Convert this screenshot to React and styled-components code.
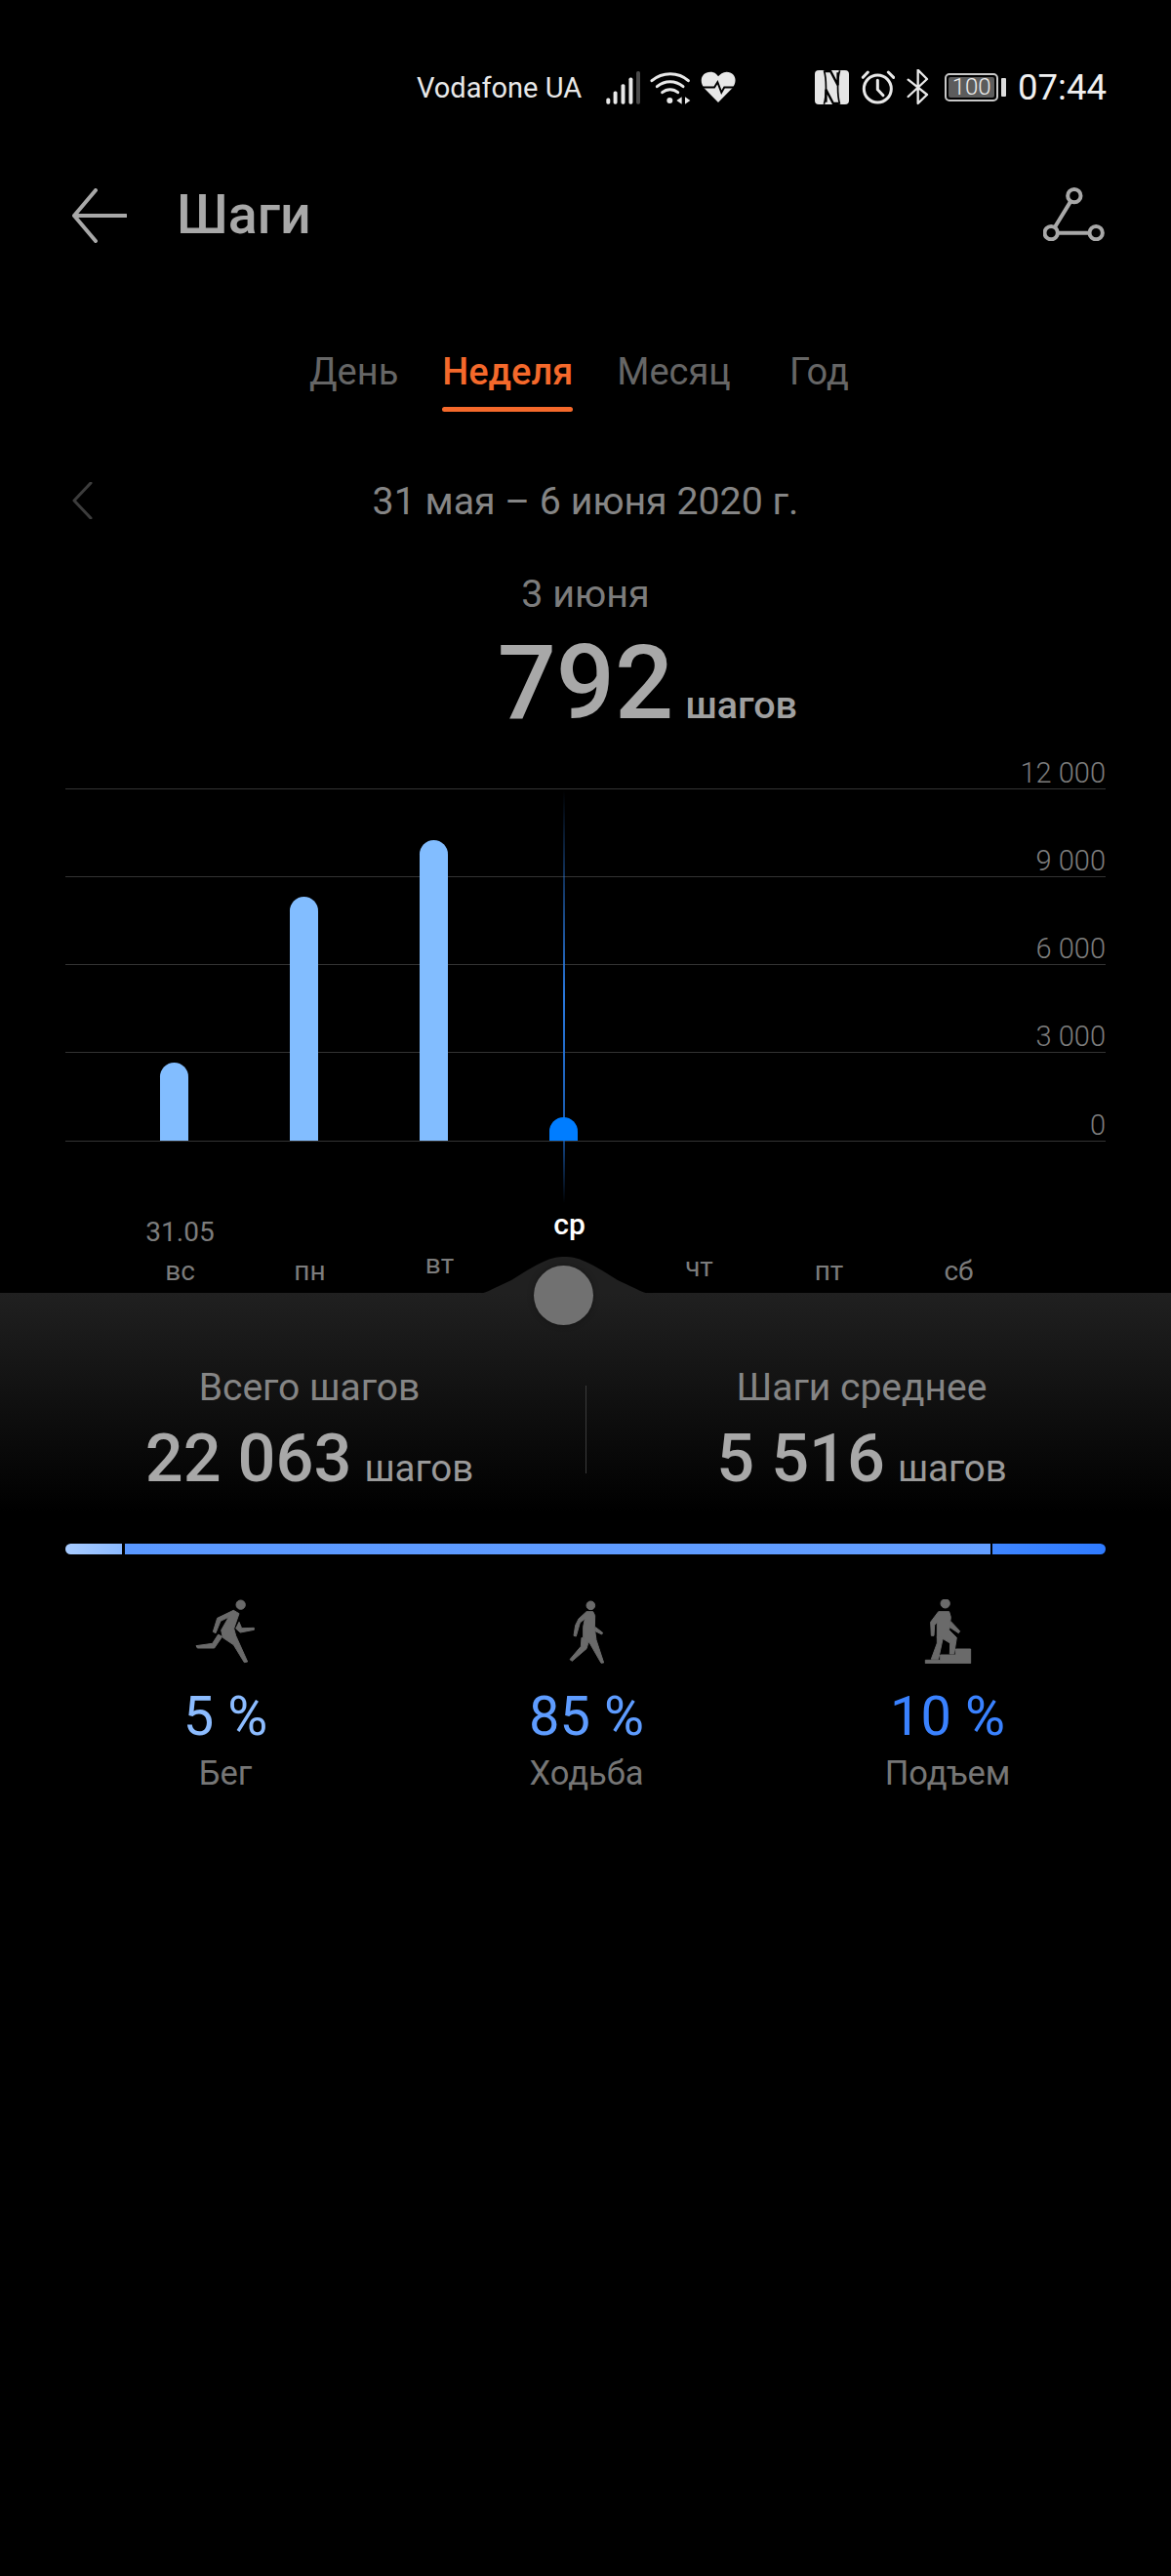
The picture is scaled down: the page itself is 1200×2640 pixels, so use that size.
import React from "react";
import styled, { createGlobalStyle } from "styled-components";

const GlobalStyle = createGlobalStyle`
  html, body {
    margin: 0;
    background: #000;
    font-family: Roboto, "Liberation Sans", sans-serif;
  }
  * {
    box-sizing: border-box;
  }
`;

const Page = styled.div`
  width: 1200px;
  min-height: 2640px;
  background: #000;
  overflow: hidden;
`;

/* status bar */
const StatusBar = styled.div`
  height: 176px;
  padding: 3px 66px 0 0;
  display: flex;
  align-items: center;
  justify-content: flex-end;
  gap: 80px;
  color: #e8e8e8;
`;
const StatusGroup = styled.div`
  display: flex;
  align-items: center;
  gap: ${(p) => p.$gap}px;
`;
const Carrier = styled.span`
  font-size: 29px;
  line-height: 36px;
  margin-right: 15px;
`;
const Clock = styled.span`
  font-size: 36.5px;
  line-height: 40px;
  color: #f0f0f0;
`;
const Battery = styled.div`
  margin-left: 4px;
  display: flex;
  align-items: center;
  gap: 3px;
`;
const BatteryBody = styled.div`
  width: 55px;
  height: 29px;
  padding: 2px;
  border: 2px solid #c8c8c8;
  border-radius: 5px;
  display: flex;
`;
const BatteryFill = styled.div`
  flex: 1;
  background: #5c5c5c;
  border-radius: 2px;
  color: #eee;
  font-size: 24px;
  font-weight: 300;
  line-height: 21px;
  text-align: center;
`;
const BatteryNub = styled.div`
  width: 5px;
  height: 19px;
  background: #dcdcdc;
  border-radius: 1px;
`;

/* header */
const Header = styled.div`
  height: 90px;
  padding: 0 68px 0 74px;
  display: flex;
  align-items: center;
`;
const Title = styled.h1`
  margin: 0 0 0 51px;
  flex: 1;
  font-size: 55.5px;
  line-height: 64px;
  font-weight: 500;
  color: #a8a8a8;
`;
const RouteSvg = styled.svg`
  margin-bottom: 3px;
`;

/* tabs */
const Tabs = styled.div`
  padding: 92px 0 0 317px;
  display: flex;
  gap: 45px;
`;
const Tab = styled.div`
  min-width: 91px;
  font-size: 38px;
  line-height: 46px;
  text-align: center;
  font-weight: ${(p) => (p.$active ? 500 : 400)};
  color: ${(p) => (p.$active ? "#f5692b" : "#666")};
  &::after {
    content: "";
    display: block;
    height: 5px;
    margin-top: 13px;
    border-radius: 3px;
    background: ${(p) => (p.$active ? "#f5692b" : "transparent")};
  }
`;

/* date + selected day */
const DateRow = styled.div`
  margin-top: 69px;
  padding: 0 74px;
  display: grid;
  grid-template-columns: 1fr auto 1fr;
  align-items: center;
`;
const ChevronSvg = styled.svg`
  margin-bottom: 2px;
`;
const DateText = styled.div`
  font-size: 39.3px;
  line-height: 46px;
  color: #858585;
`;
const DayTitle = styled.div`
  margin-top: 49px;
  font-size: 39.5px;
  line-height: 46px;
  text-align: center;
  color: #7c7c7c;
`;
const BigRow = styled.div`
  margin-top: 15px;
  display: grid;
  grid-template-columns: 1fr auto 1fr;
  align-items: baseline;
`;
const BigNumber = styled.div`
  grid-column: 2;
  font-size: 106px;
  line-height: 106px;
  font-weight: 500;
  color: #a8a8a8;
`;
const BigUnit = styled.div`
  margin-left: 12px;
  font-size: 39.5px;
  line-height: 40px;
  font-weight: 500;
  color: #a0a0a0;
`;

/* chart */
const Chart = styled.div`
  position: relative;
  margin: 0 67px;
  width: 1066px;
`;
const GridRow = styled.div`
  height: ${(p) => p.$h}px;
  display: flex;
  justify-content: flex-end;
  align-items: flex-end;
  border-bottom: 1px solid #333;
  font-size: 29px;
  line-height: 32px;
  font-weight: 300;
  color: #7d7d7d;
`;
const Marker = styled.div`
  position: absolute;
  left: 510px;
  top: 57px;
  width: 2px;
  height: 423px;
  background: linear-gradient(
    to bottom,
    rgba(42, 120, 220, 0),
    #2a78dc 50%,
    #1a5cb0 80%,
    rgba(20, 70, 140, 0)
  );
`;
const Bars = styled.div`
  position: absolute;
  left: 45px;
  bottom: 1px;
  display: grid;
  grid-template-columns: repeat(7, 133px);
  align-items: end;
  justify-items: center;
`;
const Bar = styled.div`
  width: 29px;
  height: ${(p) => p.$h}px;
  border-radius: 15px 15px 0 0;
  background: ${(p) => (p.$active ? "#007dff" : "#82bdff")};
`;

/* weekday labels */
const Days = styled.div`
  height: 155px;
  padding-left: 118px;
  display: grid;
  grid-template-columns: repeat(7, 133px);
  align-items: end;
`;
const Day = styled.div`
  padding-bottom: ${(p) => p.$lift}px;
  display: flex;
  flex-direction: column;
  align-items: center;
  gap: 8px;
  font-size: ${(p) => (p.$active ? 30 : 28)}px;
  line-height: 32px;
  font-weight: ${(p) => (p.$active ? 500 : 400)};
  color: ${(p) => (p.$active ? "#fff" : "#7c7c7c")};
`;

/* bottom panel */
const Panel = styled.div`
  position: relative;
  padding-top: 74px;
  background: linear-gradient(to bottom, #202020, #000 225px);
`;
const Hump = styled.svg`
  position: absolute;
  left: 487px;
  top: -37px;
  display: block;
`;
const Knob = styled.div`
  position: absolute;
  left: 547px;
  top: -28px;
  width: 61px;
  height: 61px;
  border-radius: 50%;
  background: #717171;
  box-shadow: 0 0 6px rgba(0, 0, 0, 0.35);
`;
const Stats = styled.div`
  padding: 0 67px;
  display: grid;
  grid-template-columns: 1fr 2px 1fr;
  column-gap: 32px;
`;
const Stat = styled.div`
  text-align: center;
`;
const StatLabel = styled.div`
  font-size: 39px;
  line-height: 46px;
  color: #858585;
`;
const StatValue = styled.div`
  margin-top: 14px;
  font-size: 68.5px;
  line-height: 72px;
  font-weight: 500;
  color: #a8a8a8;
`;
const StatUnit = styled.span`
  margin-left: 13px;
  font-size: 38.5px;
  line-height: 1;
  font-weight: 400;
  color: #9a9a9a;
`;
const Divider = styled.div`
  width: 1px;
  height: 90px;
  margin: 21px 0 0 1px;
  background: #3a3a3a;
`;
const Progress = styled.div`
  margin: 51px 67px 0;
  height: 11px;
  display: flex;
  gap: 2.5px;
  border-radius: 6px;
  overflow: hidden;
`;
const Segment = styled.div`
  flex: ${(p) => p.$size} 0 0;
  background: linear-gradient(to right, ${(p) => p.$from}, ${(p) => p.$to});
`;
const Metrics = styled.div`
  margin: 46px 46px 0;
  display: grid;
  grid-template-columns: repeat(3, 370px);
`;
const Metric = styled.div`
  display: flex;
  flex-direction: column;
  align-items: center;
`;
const MetricValue = styled.div`
  margin-top: 24px;
  font-size: 56px;
  line-height: 60px;
  color: ${(p) => p.$color};
`;
const MetricLabel = styled.div`
  margin-top: 8px;
  font-size: 34.5px;
  line-height: 40px;
  color: #767676;
`;

const SignalIcon = () => (
  <svg width="37" height="37" viewBox="60 60 112 110">
    <rect x="64" y="148" width="12" height="19" rx="5" fill="#e8e8e8" />
    <rect x="86" y="127" width="12" height="40" rx="5" fill="#e8e8e8" />
    <rect x="110" y="105" width="12" height="62" rx="5" fill="#e8e8e8" />
    <rect x="134" y="85" width="12" height="82" rx="5" fill="#e8e8e8" />
    <rect x="157" y="65" width="12" height="102" rx="5" fill="#4a4a4a" />
  </svg>
);

const WifiIcon = () => (
  <svg width="42" height="36" viewBox="200 60 126 108">
    <g fill="none" stroke="#e8e8e8" strokeWidth="9" strokeLinecap="round">
      <path d="M206 92C238 64 288 64 318 92" />
      <path d="M222 110C246 90 278 90 302 110" />
      <path d="M238 128C252 116 272 116 286 128" />
    </g>
    <circle cx="261" cy="153" r="9" fill="#e8e8e8" />
    <path d="M298 142V164L282 153Z M308 142V164L324 153Z" fill="#e8e8e8" />
  </svg>
);

const HeartIcon = () => (
  <svg width="38" height="33" viewBox="350 66 112 100">
    <path
      d="M406 163L362 118C345 95 355 68 382 68C395 68 402 75 406 82C412 75 420 68 432 68C458 68 468 95 450 118Z"
      fill="#e8e8e8"
    />
    <path
      d="M352 116H394L404 100L416 132L425 116H460"
      fill="none"
      stroke="#000"
      strokeWidth="6"
    />
  </svg>
);

const NfcIcon = () => (
  <svg width="35" height="35" viewBox="42 63 104 104">
    <rect x="42" y="63" width="104" height="104" rx="12" fill="#e6e6e6" />
    <path
      d="M70 64C78 90 78 140 70 166M118 64C110 90 110 140 118 166"
      fill="none"
      stroke="#000"
      strokeWidth="5"
    />
    <path
      d="M72 66H90L112 108V70M116 164H98L76 122V160"
      fill="none"
      stroke="#000"
      strokeWidth="7"
    />
  </svg>
);

const AlarmIcon = () => (
  <svg width="35" height="35" viewBox="183 63 105 105">
    <g fill="none" stroke="#e8e8e8" strokeWidth="9" strokeLinecap="round">
      <circle cx="235" cy="120" r="42" />
      <path d="M235 94V122L252 140" />
      <path d="M190 85L205 69M268 69L284 85" />
    </g>
  </svg>
);

const BluetoothIcon = () => (
  <svg width="23" height="37" viewBox="323 60 69 111">
    <path
      d="M328 92L386 138L358 165V62L386 90L328 144"
      fill="none"
      stroke="#e8e8e8"
      strokeWidth="7"
      strokeLinecap="round"
      strokeLinejoin="round"
    />
  </svg>
);

const BackIcon = () => (
  <svg width="56" height="56" viewBox="0 0 56 56">
    <path
      d="M24 2L2 28L24 54M2 28H55"
      fill="none"
      stroke="#a8a8a8"
      strokeWidth="4"
      strokeLinecap="round"
      strokeLinejoin="round"
    />
  </svg>
);

const RouteIcon = () => (
  <RouteSvg width="63" height="55" viewBox="80 65 188 165">
    <g fill="none" stroke="#a8a8a8" strokeWidth="12">
      <circle cx="175" cy="91" r="20" />
      <circle cx="104" cy="205" r="20" />
      <circle cx="242" cy="205" r="20" />
      <path d="M164 108L115 188M124 205H222" />
    </g>
  </RouteSvg>
);

const ChevronIcon = () => (
  <ChevronSvg width="21" height="38" viewBox="0 0 21 38">
    <path
      d="M19 1L2 19L19 37"
      fill="none"
      stroke="#3c3c3c"
      strokeWidth="3"
      strokeLinecap="round"
      strokeLinejoin="round"
    />
  </ChevronSvg>
);

const HumpShape = () => (
  <Hump width="183" height="38" viewBox="0 0 183 38">
    <path
      d="M0 38C8 38 14 35 20 32L37 24L53 14C60 10 65 7 70 5C78 1 85 0 91.5 0C98 0 105 1 113 5C118 7 123 10 130 14L146 24L163 32C169 35 175 38 183 38Z"
      fill="#202020"
    />
  </Hump>
);

const RunIcon = () => (
  <svg width="120" height="66" viewBox="0 60 360 198">
    <g fill="#6a6a6a" stroke="#6a6a6a" strokeWidth="3" strokeLinejoin="round">
      <circle cx="227" cy="77" r="14" />
      <path d="M142 160L155 118L205 94L222 104L206 150L212 172L248 252L238 254L205 200L172 178L167 155L190 115L165 127L150 164Z" />
      <path d="M170 175L146 210L94 210L90 203L140 196L158 168Z" />
      <path d="M222 130L230 149L268 148L268 154L226 162L212 150Z" />
    </g>
  </svg>
);

const WalkIcon = () => (
  <svg width="120" height="66" viewBox="-30 60 360 198">
    <g fill="#6a6a6a" stroke="#6a6a6a" strokeWidth="3" strokeLinejoin="round">
      <circle cx="163" cy="79" r="13" />
      <path d="M150 98L170 98L176 110L175 150L180 185L203 255L195 256L160 195L140 178L140 145L145 120L130 132L118 174L111 172L116 140L126 120Z" />
      <path d="M150 182L155 196L150 212L106 250L99 245L133 205L135 178Z" />
      <path d="M178 146L200 163L197 168L175 157Z" />
    </g>
  </svg>
);

const ClimbIcon = () => (
  <svg width="120" height="66" viewBox="-30 60 360 198">
    <g fill="#6a6a6a" stroke="#6a6a6a" strokeWidth="3" strokeLinejoin="round">
      <circle cx="143" cy="73" r="14" />
      <path d="M122 98L155 98L160 115L155 155L178 178L170 228L157 228L158 195L130 178L118 178L118 130L110 140L108 172L100 172L98 130Z" />
      <path d="M118 175L136 178L122 244L100 244L118 195Z" />
      <path d="M160 128L188 158L184 164L155 145Z" />
      <path d="M82 257V247H128V231H175V213H221V257Z" />
    </g>
  </svg>
);

const gridRows = [
  { label: "12 000", h: 56 },
  { label: "9 000", h: 90 },
  { label: "6 000", h: 90 },
  { label: "3 000", h: 90 },
  { label: "0", h: 91 },
];

const bars = [80, 250, 308, 24];

const days = [
  { name: "вс", lift: 6, date: "31.05" },
  { name: "пн", lift: 6 },
  { name: "вт", lift: 13 },
  { name: "ср", lift: 54, active: true },
  { name: "чт", lift: 10 },
  { name: "пт", lift: 6 },
  { name: "сб", lift: 6 },
];

const metrics = [
  { icon: <RunIcon />, value: "5 %", label: "Бег", color: "#8cbcff" },
  { icon: <WalkIcon />, value: "85 %", label: "Ходьба", color: "#5e9cff" },
  { icon: <ClimbIcon />, value: "10 %", label: "Подъем", color: "#3a82ff" },
];

const App = () => {
  return (
    <Page>
      <GlobalStyle />
      <StatusBar>
        <StatusGroup $gap={9}>
          <Carrier>Vodafone UA</Carrier>
          <SignalIcon />
          <WifiIcon />
          <HeartIcon />
        </StatusGroup>
        <StatusGroup $gap={12}>
          <NfcIcon />
          <AlarmIcon />
          <BluetoothIcon />
          <Battery>
            <BatteryBody>
              <BatteryFill>100</BatteryFill>
            </BatteryBody>
            <BatteryNub />
          </Battery>
          <Clock>07:44</Clock>
        </StatusGroup>
      </StatusBar>

      <Header>
        <BackIcon />
        <Title>Шаги</Title>
        <RouteIcon />
      </Header>

      <Tabs>
        <Tab>День</Tab>
        <Tab $active>Неделя</Tab>
        <Tab>Месяц</Tab>
        <Tab>Год</Tab>
      </Tabs>

      <DateRow>
        <ChevronIcon />
        <DateText>31 мая – 6 июня 2020 г.</DateText>
      </DateRow>

      <DayTitle>3 июня</DayTitle>
      <BigRow>
        <BigNumber>792</BigNumber>
        <BigUnit>шагов</BigUnit>
      </BigRow>

      <Chart>
        {gridRows.map((row) => (
          <GridRow key={row.label} $h={row.h}>
            {row.label}
          </GridRow>
        ))}
        <Marker />
        <Bars>
          {bars.map((h, i) => (
            <Bar key={i} $h={h} $active={i === 3} />
          ))}
        </Bars>
      </Chart>

      <Days>
        {days.map((d) => (
          <Day key={d.name} $lift={d.lift} $active={d.active}>
            {d.date && <span>{d.date}</span>}
            <span>{d.name}</span>
          </Day>
        ))}
      </Days>

      <Panel>
        <HumpShape />
        <Knob />
        <Stats>
          <Stat>
            <StatLabel>Всего шагов</StatLabel>
            <StatValue>
              22 063<StatUnit>шагов</StatUnit>
            </StatValue>
          </Stat>
          <Divider />
          <Stat>
            <StatLabel>Шаги среднее</StatLabel>
            <StatValue>
              5 516<StatUnit>шагов</StatUnit>
            </StatValue>
          </Stat>
        </Stats>

        <Progress>
          <Segment $size={58.5} $from="#a8ccff" $to="#8cbaff" />
          <Segment $size={887} $from="#5a98ff" $to="#639eff" />
          <Segment $size={116} $from="#3f86ff" $to="#2f7bff" />
        </Progress>

        <Metrics>
          {metrics.map((m) => (
            <Metric key={m.label}>
              {m.icon}
              <MetricValue $color={m.color}>{m.value}</MetricValue>
              <MetricLabel>{m.label}</MetricLabel>
            </Metric>
          ))}
        </Metrics>
      </Panel>
    </Page>
  );
};

export default App;
